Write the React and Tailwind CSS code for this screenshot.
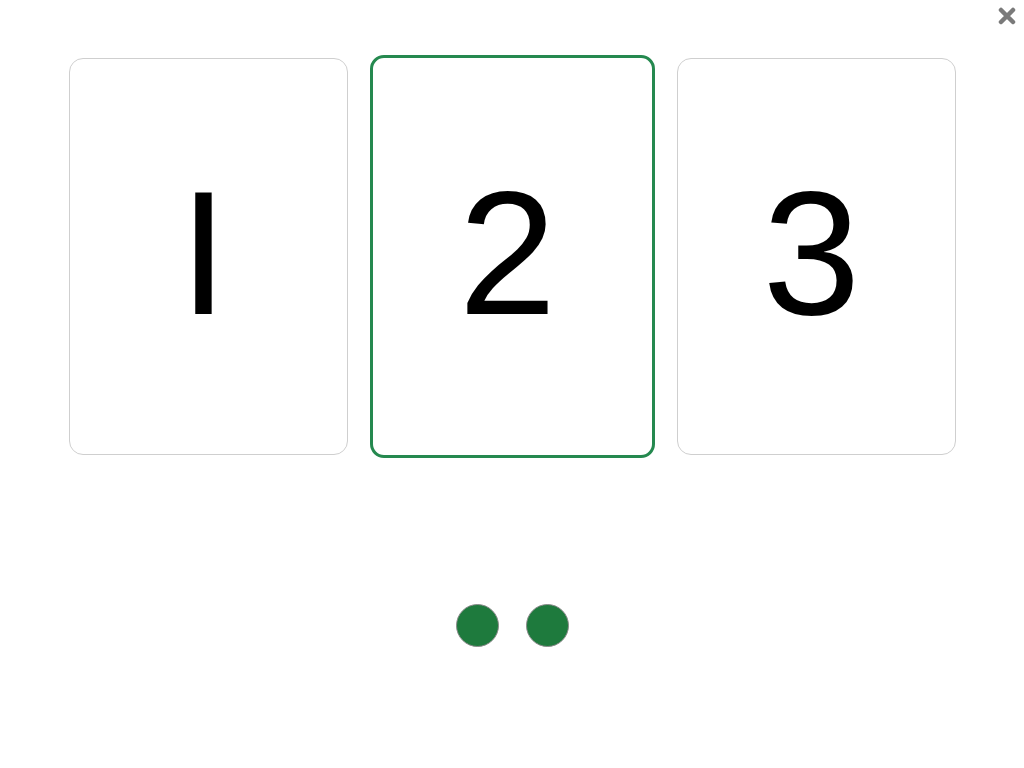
import { useState } from 'react';

const cards = ['I', '2', '3'];

function App() {
    const [selected, setSelected] = useState(1);

    return (
        <div className="relative w-screen h-screen bg-white" style={{ fontFamily: '"Liberation Sans", Arial, sans-serif' }}>
            {/* close */}
            <button className="absolute top-[6px] right-[7px] w-[20px] h-[20px] flex items-center justify-center">
                <svg width="18" height="18" viewBox="0 0 18 18">
                    <path d="M3 3 L15 15 M15 3 L3 15" stroke="#7a7a7a" strokeWidth="4.5" strokeLinecap="round" />
                </svg>
            </button>

            <div className="flex justify-center items-start gap-[25px] pt-[55px]">
                {cards.map((c, i) => (
                    <div
                        key={i}
                        onClick={() => setSelected(i)}
                        className={`flex items-center justify-center bg-white rounded-[14px] ${selected === i
                            ? 'w-[285px] h-[403px] -mx-[3px] border-[3px] border-[#25894f]'
                            : 'w-[279px] h-[397px] mt-[3px] border border-[#cfcfcf]'}`}
                    >
                        <span className="text-[176px] leading-none text-black -mt-[8px] -ml-[9px]">{c}</span>
                    </div>
                ))}
            </div>

            <div className="flex justify-center gap-[27px] pt-[146px]">
                <div className="w-[43px] h-[43px] rounded-full bg-[#1e7a3d] border border-[#8a8a8a]"></div>
                <div className="w-[43px] h-[43px] rounded-full bg-[#1e7a3d] border border-[#8a8a8a]"></div>
            </div>
        </div>
    );
}

export default App;
